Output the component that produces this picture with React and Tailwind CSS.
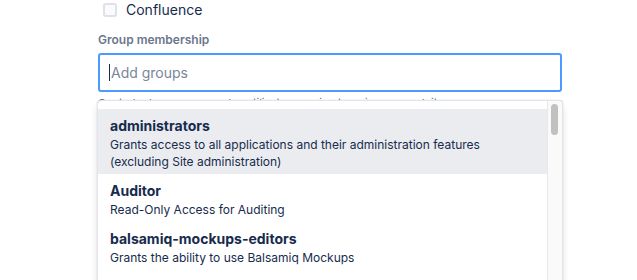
import React from "react";

const groups = [
  {
    name: "administrators",
    description:
      "Grants access to all applications and their administration features (excluding Site administration)",
    active: true,
  },
  { name: "Auditor", description: "Read-Only Access for Auditing" },
  {
    name: "balsamiq-mockups-editors",
    description: "Grants the ability to use Balsamiq Mockups",
  },
];

export default function App() {
  return (
    <div className="relative h-[280px] w-[637px] overflow-hidden bg-white font-['Inter','Noto_Sans',sans-serif] text-[#172b4d]">
      <div className="ml-[98px] w-[464px]">
        <label className="flex h-[20px] items-center pl-[5px]">
          <span className="h-[14px] w-[14px] rounded-[3px] border-2 border-[#dfe1e6] bg-[#fafbfc]" />
          <span className="ml-[9px] text-[14px] leading-[20px]">Confluence</span>
        </label>

        <div className="mt-[12px] text-[12px] font-semibold leading-[16px] text-[#6b778c]">
          Group membership
        </div>

        <div className="mt-[5px] flex h-[39px] items-center rounded-[3px] border-2 border-[#4c9aff] bg-white px-[9px]">
          <span className="mr-px h-[17px] w-px bg-[#172b4d]" />
          <span className="text-[14px] text-[#7a869a]">Add groups</span>
        </div>

        <div className="mt-[4px] text-[11px] leading-[14px] text-[#6b778c]">
          Centrale de groupe pour les utilisateurs qui ont accès aux produits
        </div>
      </div>

      <div className="absolute left-[97px] top-[100px] flex h-[200px] w-[466px] overflow-hidden rounded-[4px] border border-[#e4e5e9] bg-white shadow-[0_4px_8px_-2px_rgba(9,30,66,0.2),0_0_1px_rgba(9,30,66,0.25)]">
        <ul className="flex-1 pt-[8px]">
          {groups.map((group) => (
            <li
              key={group.name}
              className={
                group.active
                  ? "bg-[#ebecf0] pb-[4px] pl-[12px] pr-[40px] pt-[7px]"
                  : "pb-[4px] pl-[12px] pr-[40px] pt-[7px]"
              }
            >
              <div className="text-[14px] font-bold leading-[20px]">{group.name}</div>
              <div className="text-[12px] leading-[17px]">{group.description}</div>
            </li>
          ))}
        </ul>
        <div className="w-[15px] border-l border-[#e8e8e8] bg-[#fafafa] px-[3px] pt-[3px]">
          <div className="h-[31px] w-[7px] rounded-full bg-[#c1c1c1]" />
        </div>
      </div>
    </div>
  );
}
